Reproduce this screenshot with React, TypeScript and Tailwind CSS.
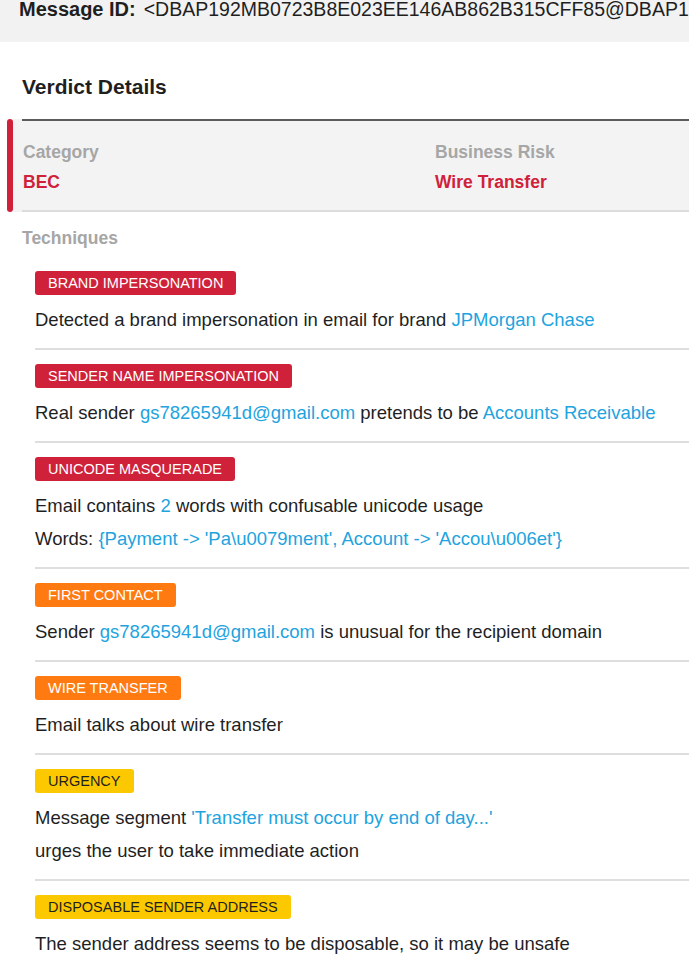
import type { ReactNode } from 'react';

type Tone = 'red' | 'orange' | 'yellow';

interface Technique {
    label: string;
    tone: Tone;
    lines: ReactNode[];
}

const toneClass: Record<Tone, string> = {
    red: 'bg-[#d0213a] text-white',
    orange: 'bg-[#ff7b12] text-white',
    yellow: 'bg-[#fcc900] text-[#1f1f1f]',
};

const Link = ({ children }: { children: ReactNode }) => <span className="text-[#22a3de]">{children}</span>;

const techniques: Technique[] = [
    {
        label: 'BRAND IMPERSONATION',
        tone: 'red',
        lines: [<>Detected a brand impersonation in email for brand <Link>JPMorgan Chase</Link></>],
    },
    {
        label: 'SENDER NAME IMPERSONATION',
        tone: 'red',
        lines: [<>Real sender <Link>gs78265941d@gmail.com</Link> pretends to be <Link>Accounts Receivable</Link></>],
    },
    {
        label: 'UNICODE MASQUERADE',
        tone: 'red',
        lines: [
            <>Email contains <Link>2</Link> words with confusable unicode usage</>,
            <>Words: <Link>{"{Payment -> 'Pa\\u0079ment', Account -> 'Accou\\u006et'}"}</Link></>,
        ],
    },
    {
        label: 'FIRST CONTACT',
        tone: 'orange',
        lines: [<>Sender <Link>gs78265941d@gmail.com</Link> is unusual for the recipient domain</>],
    },
    {
        label: 'WIRE TRANSFER',
        tone: 'orange',
        lines: ['Email talks about wire transfer'],
    },
    {
        label: 'URGENCY',
        tone: 'yellow',
        lines: [
            <>Message segment <Link>'Transfer must occur by end of day...'</Link></>,
            'urges the user to take immediate action',
        ],
    },
    {
        label: 'DISPOSABLE SENDER ADDRESS',
        tone: 'yellow',
        lines: ['The sender address seems to be disposable, so it may be unsafe'],
    },
];

export default function App() {
    return (
        <div className="w-[689px] h-[960px] overflow-hidden bg-white font-['Liberation_Sans',Arial,sans-serif] text-[#1f1f1f]">
            {/* Message id strip */}
            <div className="h-[42px] overflow-hidden whitespace-nowrap bg-[#f2f2f2] pl-[19px]">
                <div className="-mt-[3px] text-[20px] leading-[24px]">
                    <span className="font-bold">Message ID:</span>
                    <span className="ml-[8px] text-[19.5px]">&lt;DBAP192MB0723B8E023EE146AB862B315CFF85@DBAP192MB0723.EURP192.PROD.OUTLOOK.COM&gt;</span>
                </div>
            </div>

            <h2 className="mt-[33px] pl-[22px] text-[21px] font-bold leading-[24px]">Verdict Details</h2>

            {/* Verdict summary */}
            <div className="mt-[20px] flex pl-[7px]">
                <div className="w-[6px] shrink-0 rounded-[3px] bg-[#d0213a]" />
                <div className="flex-1 bg-[#f3f3f3]">
                    <div className="ml-[9px] h-[2px] bg-[#5b5b5b]" />
                    <div className="flex pl-[10px] pt-[19px] pb-[16px] text-[17.5px] font-bold leading-[24px]">
                        <div className="w-[412px]">
                            <p className="text-[#a6a6a6]">Category</p>
                            <p className="mt-[6px] text-[#d0213a]">BEC</p>
                        </div>
                        <div>
                            <p className="text-[#a6a6a6]">Business Risk</p>
                            <p className="mt-[6px] text-[#d0213a]">Wire Transfer</p>
                        </div>
                    </div>
                    <div className="ml-[9px] h-[2px] bg-[#dcdcdc]" />
                </div>
            </div>

            <p className="mt-[14px] pl-[22px] text-[17.5px] font-bold leading-[24px] text-[#a6a6a6]">Techniques</p>

            {/* Technique list */}
            <div className="mt-[21px] pl-[35px]">
                {techniques.map((t, i) => (
                    <div key={t.label}>
                        <span className={`inline-block h-[24px] rounded-[3px] px-[13px] text-[14.5px] leading-[24px] ${toneClass[t.tone]}`}>
                            {t.label}
                        </span>
                        <div className="mt-[8px] whitespace-nowrap text-[18.5px] leading-[33px]">
                            {t.lines.map((line, j) => (
                                <p key={j}>{line}</p>
                            ))}
                        </div>
                        {i < techniques.length - 1 && (
                            <div className="mt-[12px] mb-[14px] h-[2px] bg-[#dedede]" />
                        )}
                    </div>
                ))}
            </div>
        </div>
    );
}
